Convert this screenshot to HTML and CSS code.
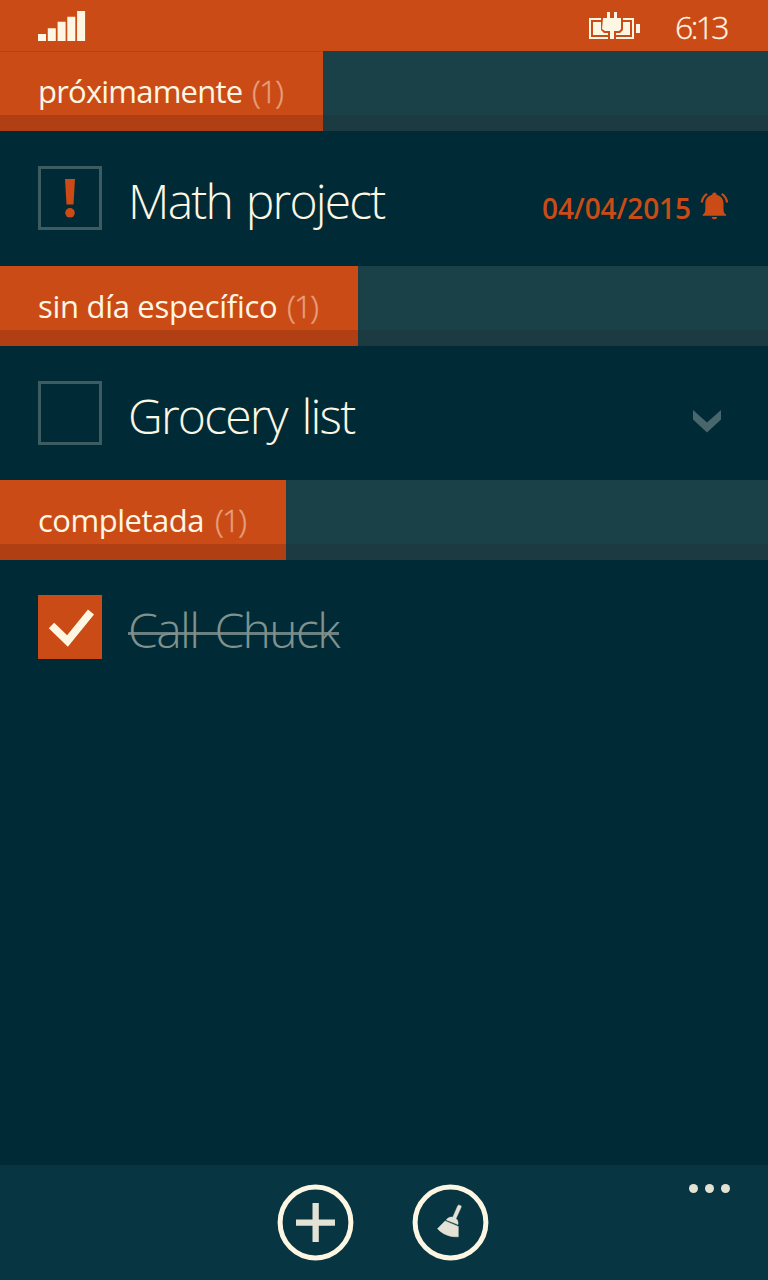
FILE: index.html
```html
<!DOCTYPE html>
<html lang="es">
<head>
<meta charset="utf-8">
<title>Tareas</title>
<link rel="stylesheet" href="styles.css">
</head>
<body>
<div class="phone">
  <header class="status">
    <svg class="signal" width="48" height="32" viewBox="0 0 48 32" fill="currentColor">
      <path d="M0 24h8v7H0zM9.800 18.300h8V31h-8zM19.600 11.800h8V31h-8zM29.300 6.700h8V31h-8zM39.100 1h8v30h-8z"/>
    </svg>
    <svg class="battery" width="52" height="28" viewBox="0 0 52 28" fill="currentColor">
      <path d="M0 6h12v2H2v17h17v2H0zM34 6h11v21H27v-2h16V8h-9z"/>
      <path d="M4 10h8v8l3 3h4v2H4zM34 10h7v13H27v-2h4l3-3z"/>
      <path d="M47 12h4v9h-4z"/>
      <path d="M14 6h4V0h3v6h4V0h3v6h4v11l-2 2h-5v8h-4v-8h-5l-3-2z"/>
    </svg>
    <span class="time">6:13</span>
  </header>

  <main class="list">
    <section class="group">
      <h2 class="group-head"><span class="tab tab-soon"><span class="label">próximamente</span><span class="count">(1)</span></span></h2>
      <div class="task">
        <span class="check">
          <svg width="12" height="40" viewBox="0 0 12 40" fill="#cb4b16"><path d="M1 0h10L9.500 25.500h-7z"/><circle cx="6" cy="33.800" r="4.800"/></svg>
        </span>
        <span class="title title-math">Math project</span>
        <span class="due">04/04/2015</span>
        <svg class="bell" width="30" height="29" viewBox="0 0 30 29" fill="#cb4b16">
          <path d="M2.700 23.800v-1.200C4.700 21.500 5.300 20 5.300 17V11.500c0-4.600 2.700-7.700 6.900-8.700.2-1.500.9-2.300 2.200-2.300s2 .8 2.200 2.300c4.200 1 6.900 4.100 6.900 8.700V17c0 3 .6 4.500 2.600 5.600v1.200z"/>
          <path d="M11.600 25h5.600c-.3 1.500-1.200 2.300-2.800 2.300s-2.500-.8-2.800-2.300z"/>
          <path d="M7 1.800C4 3.800 2.300 6.500 1.700 10.500M21.800 1.800c3 2 4.700 4.700 5.300 8.700" fill="none" stroke="#cb4b16" stroke-width="2.200"/>
        </svg>
      </div>
    </section>

    <section class="group">
      <h2 class="group-head"><span class="tab tab-nodate"><span class="label">sin día específico</span><span class="count">(1)</span></span></h2>
      <div class="task">
        <span class="check"></span>
        <span class="title title-grocery">Grocery list</span>
        <svg class="chevron" width="28" height="23" viewBox="0 0 28 23" fill="#48666b"><path d="M0 0l14 12.500L28 0v9.500L14 22.500 0 9.500z"/></svg>
      </div>
    </section>

    <section class="group">
      <h2 class="group-head"><span class="tab tab-done"><span class="label">completada</span><span class="count">(1)</span></span></h2>
      <div class="task">
        <span class="check check-on">
          <svg width="64" height="64" viewBox="0 0 64 64" fill="none" stroke="#fdf6e3" stroke-width="7.800"><path d="M13.500 30.500l16 15.500L53 17"/></svg>
        </span>
        <span class="title title-call">Call Chuck</span>
      </div>
    </section>
  </main>

  <footer class="appbar">
    <span></span>
    <div class="actions">
      <svg width="77" height="77" viewBox="-.5 -.5 77 77">
        <circle cx="38" cy="38" r="35.400" fill="none" stroke="#fdf6e3" stroke-width="5"/>
        <path d="M35 18.500h6.300V35h16.200v6.300H41.300V57.500H35V41.300H18.500V35H35z" fill="#e3e2d4"/>
      </svg>
      <svg width="77" height="77" viewBox="-.5 -.5 77 77">
        <circle cx="38" cy="38" r="35.400" fill="none" stroke="#fdf6e3" stroke-width="5"/>
        <path d="M45.300 21.200l.9-.8 2.400 1 .1 1.200L43.500 34c1.700 1.500 2.300 3.300 2 6.100L33.800 35.400c1.700-2.200 3.800-3.200 6.500-2.700zM32.600 36.400L45.800 42v10.300c-8.500.3-15.500-2.300-20.800-8.100z" fill="#e3e2d4" stroke="#e3e2d4" stroke-width=".5"/>
      </svg>
    </div>
    <svg class="more" width="42" height="10" viewBox="0 0 42 10" fill="#e3e2d4"><circle cx="4.500" cy="5.500" r="4.500"/><circle cx="20.500" cy="5.500" r="4.500"/><circle cx="36.500" cy="5.500" r="4.500"/></svg>
  </footer>
</div>
</body>
</html>
```
FILE: styles.css
```css
* { box-sizing: border-box; }
body { margin: 0; background: #002b36; }
.phone {
  width: 768px;
  height: 1280px;
  display: flex;
  flex-direction: column;
  overflow: hidden;
  background: #002b36;
  color: #fdf6e3;
  font-family: "Open Sans", "Noto Sans", sans-serif;
}
svg { display: block; flex: none; }
.status {
  flex: none;
  height: 51px;
  padding: 0 38px;
  display: flex;
  background: #cb4b16;
}
.signal { margin-top: 10px; }
.battery { margin: 12px 0 0 503px; }
.time {
  margin-left: 34px;
  font-size: 32px;
  font-weight: 300;
  line-height: 53px;
  letter-spacing: -2.600px;
  -webkit-text-stroke: 0.300px;
  white-space: nowrap;
}
.list { flex: 1; }
.group { height: 214.500px; }
.group-head {
  margin: 0;
  height: 80px;
  display: flex;
  background: linear-gradient(rgba(0, 0, 0, 0) 64px, #1b3a41 64px) #1b4148;
  font-size: 31px;
  font-weight: 400;
}
.tab {
  height: 80px;
  padding-left: 38px;
  display: flex;
  background: linear-gradient(rgba(0, 0, 0, 0) 64px, #b04013 64px) #cb4b16;
  line-height: 80px;
  white-space: nowrap;
}
.group:first-child .tab { box-shadow: inset 0 1px #b54315; }
.tab-soon { width: 323px; }
.tab-nodate { width: 358px; }
.tab-done { width: 286px; }
.tab-soon .label { width: 214px; letter-spacing: -0.800px; }
.tab-nodate .label { width: 249px; letter-spacing: -0.300px; }
.tab-done .label { width: 177px; letter-spacing: -0.500px; }
.count {
  font-size: 32px;
  font-weight: 300;
  color: #e5a07c;
  letter-spacing: -1.800px;
  -webkit-text-stroke: 0.400px;
}
.task {
  height: 134.500px;
  padding: 0 38px;
  display: flex;
}
.check {
  flex: none;
  width: 64px;
  height: 64px;
  margin-top: 35px;
  border: 3px solid #3d5c61;
  display: flex;
  justify-content: center;
  padding-top: 10px;
}
.check-on { border: 0; padding: 0; background: #cb4b16; }
.title {
  flex: none;
  margin-left: 26px;
  font-size: 48px;
  font-weight: 300;
  line-height: 140px;
  white-space: nowrap;
}
.title-math { width: 414px; letter-spacing: -1.800px; word-spacing: 3px; }
.title-grocery { width: 565px; letter-spacing: -1.800px; word-spacing: 4px; }
.title-call {
  align-self: flex-start;
  letter-spacing: -1.600px;
  word-spacing: 5px;
  color: #80918e;
  background: linear-gradient(#6b8080, #6b8080) 0 72px / 100% 3px no-repeat;
}
.due {
  width: 158px;
  color: #cb4b16;
  font-size: 28px;
  font-weight: 600;
  line-height: 155px;
  letter-spacing: -0.100px;
  white-space: nowrap;
}
.bell { margin-top: 61px; }
.chevron { margin-top: 64px; }
.appbar {
  flex: none;
  height: 115px;
  display: grid;
  grid-template-columns: 277px 1fr 79px;
  background: #073642;
}
.actions { display: flex; gap: 58px; padding-top: 19px; }
.more { margin-top: 18px; }
```
